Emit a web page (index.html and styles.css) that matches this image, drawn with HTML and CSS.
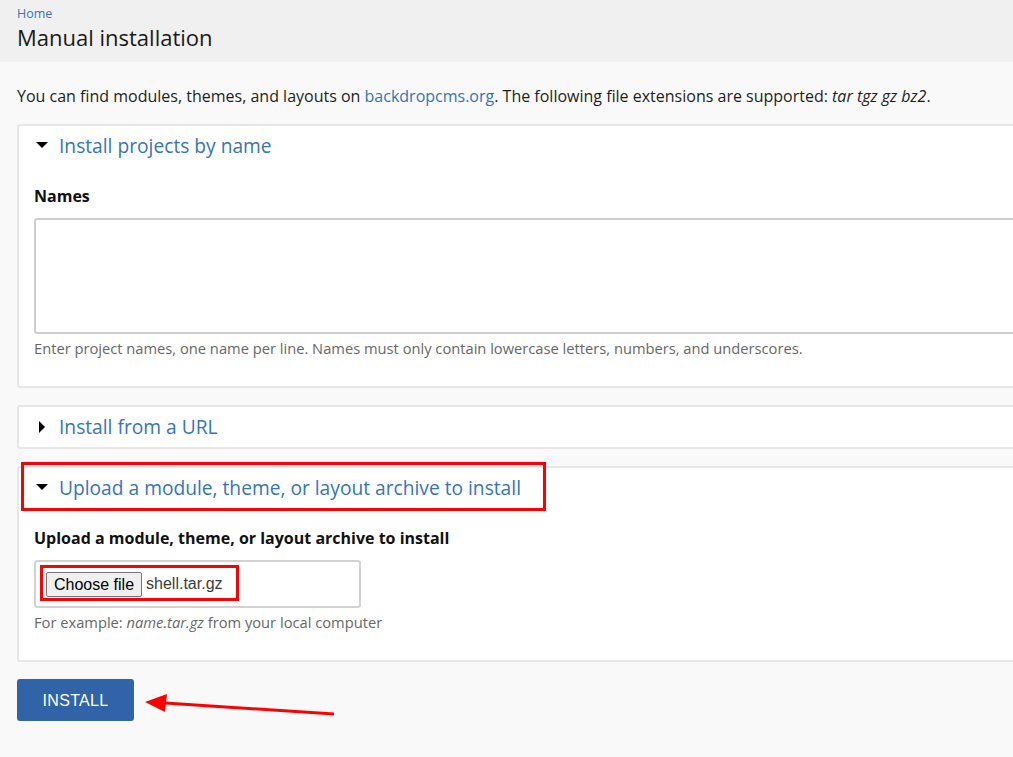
FILE: index.html
```html
<!DOCTYPE html>
<html lang="en">
<head>
<meta charset="utf-8">
<title>Manual installation</title>
<link rel="stylesheet" href="styles.css">
</head>
<body>
<header class="page-header">
  <a class="crumb" href="#">Home</a>
  <h1 class="title">Manual installation</h1>
</header>
<main class="content">
  <p class="intro">You can find modules, themes, and layouts on <a href="#">backdropcms.org</a>. The following file extensions are supported: <em>tar tgz gz bz2</em>.</p>

  <section class="box">
    <div class="summary"><span class="tri-down"></span><span class="legend">Install projects by name</span></div>
    <div class="box-body">
      <div class="label">Names</div>
      <div class="textarea"></div>
      <div class="desc">Enter project names, one name per line. Names must only contain lowercase letters, numbers, and underscores.</div>
    </div>
  </section>

  <section class="box box-closed">
    <div class="summary"><span class="tri-right"></span><span class="legend">Install from a URL</span></div>
  </section>

  <section class="box">
    <div class="summary"><span class="tri-down"></span><span class="legend">Upload a module, theme, or layout archive to install</span></div>
    <span class="mark mark-legend"></span>
    <div class="box-body">
      <div class="label">Upload a module, theme, or layout archive to install</div>
      <div class="filebox">
        <span class="filebtn">Choose file</span><span class="filename">shell.tar.gz</span>
        <span class="mark mark-file"></span>
      </div>
      <div class="desc">For example: <em>name.tar.gz</em> from your local computer</div>
    </div>
  </section>

  <div class="actions">
    <button class="install">INSTALL</button>
    <svg class="arrow" width="200" height="30" viewBox="0 0 200 30">
      <line x1="189" y1="24" x2="20" y2="13" stroke="#ff0000" stroke-width="3"/>
      <polygon points="0,12 22,4 20,22" fill="#ff0000"/>
    </svg>
  </div>
</main>
</body>
</html>
```
FILE: styles.css
```css
html, body {
  margin: 0;
  padding: 0;
}
body {
  background: #f9f9f9;
  font-family: "Open Sans", "Noto Sans", sans-serif;
  color: #1e1e1e;
  overflow: hidden;
  width: 1013px;
  height: 757px;
}
a {
  color: #3574bb;
  text-decoration: none;
}
.page-header {
  background: #f0f0f0;
  height: 62px;
  padding: 0 17px;
  box-sizing: border-box;
  display: flex;
  flex-direction: column;
}
.crumb {
  font-size: 12.5px;
  line-height: 16px;
  margin-top: 6px;
}
.title {
  margin: 0;
  font-weight: 400;
  font-size: 22px;
  line-height: 30px;
  color: #1a1a1a;
}
.content {
  padding: 0 0 0 17px;
}
.intro {
  margin: 0;
  padding-top: 22px;
  font-size: 16px;
  line-height: 24px;
  height: 40px;
}
.box {
  position: relative;
  background: #fff;
  border: 2px solid #e6e6e6;
  border-right: none;
  border-radius: 3px 0 0 3px;
  margin-bottom: 17px;
}
.summary {
  display: flex;
  align-items: center;
  padding: 8px 0 9px;
  height: 24px;
}
.box-closed .summary {
  padding-bottom: 8px;
}
.tri-down {
  width: 0;
  height: 0;
  border-left: 6px solid transparent;
  border-right: 6px solid transparent;
  border-top: 6px solid #000;
  margin: -3px 11px 0 17px;
}
.tri-right {
  width: 0;
  height: 0;
  border-top: 6px solid transparent;
  border-bottom: 6px solid transparent;
  border-left: 6px solid #000;
  margin: 0 14px 0 20px;
}
.legend {
  font-size: 19.2px;
  line-height: 24px;
  color: #3574bb;
}
.box-body {
  padding: 17px 0 28px 15px;
}
.label {
  font-weight: 700;
  font-size: 16px;
  line-height: 24px;
  color: #111;
  margin-bottom: 10px;
}
.textarea {
  height: 112px;
  border: 2px solid #cfcfcf;
  border-right: none;
  border-radius: 3px 0 0 3px;
  background: #fff;
}
.desc {
  font-size: 14.7px;
  line-height: 20px;
  color: #676767;
  margin-top: 4px;
}
.filebox {
  position: relative;
  width: 323px;
  height: 44px;
  border: 2px solid #d2d2d2;
  border-radius: 3px;
  display: flex;
  align-items: center;
  font-family: "Liberation Sans", Arial, sans-serif;
  font-size: 16px;
}
.filebtn {
  margin-left: 10px;
  height: 23px;
  line-height: 23px;
  padding: 0 7px;
  background: #efefef;
  border: 1px solid #767676;
  border-radius: 2px;
  color: #000;
}
.filename {
  margin-left: 4px;
  color: #3c3c3c;
}
.mark {
  position: absolute;
  border: 3px solid #ff0000;
  box-sizing: border-box;
  pointer-events: none;
}
.mark-legend {
  left: 2px;
  top: -6px;
  width: 525px;
  height: 49px;
}
.mark-file {
  left: 4px;
  top: 3px;
  width: 199px;
  height: 36px;
}
.actions {
  display: flex;
  align-items: flex-start;
}
.install {
  width: 117px;
  height: 42px;
  background: #3063a8;
  color: #fff;
  border: none;
  border-radius: 3px;
  font-family: "Liberation Sans", Arial, sans-serif;
  font-size: 16px;
  letter-spacing: 0.3px;
  padding: 2px 0 0;
}
.arrow {
  margin-left: 11px;
  margin-top: 11px;
}
```
